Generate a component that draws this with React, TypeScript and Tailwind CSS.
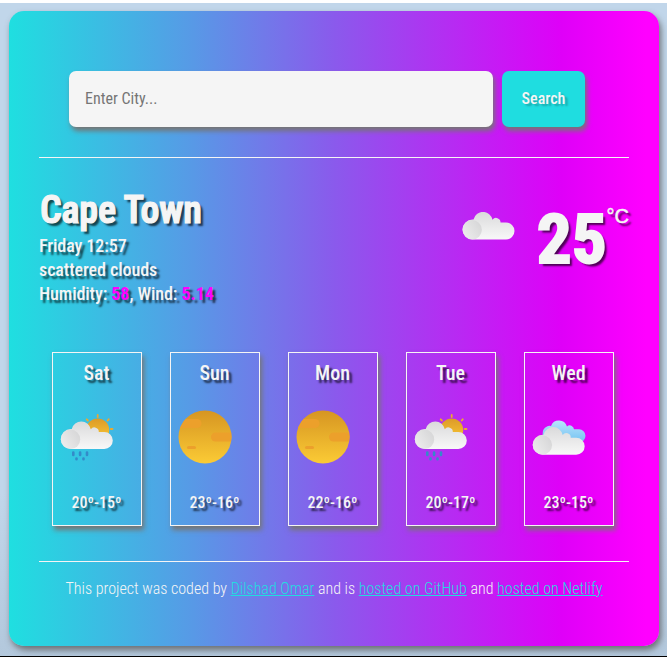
import React from "react";

type Kind = "showers" | "clear" | "broken" | "scattered";

function Cloud({ id }: { id: string }) {
  return (
    <>
      <defs>
        <linearGradient id={`${id}-body`} x1="0" y1="0" x2="0" y2="1">
          <stop offset="0" stopColor="#dadadb" />
          <stop offset="1" stopColor="#f8f8f8" />
        </linearGradient>
        <linearGradient id={`${id}-puff`} x1="1" y1="0.3" x2="0" y2="0.7">
          <stop offset="0" stopColor="#d2d2d3" />
          <stop offset="1" stopColor="#ebebeb" />
        </linearGradient>
      </defs>
      <path
        d="M10.500 27.500a10 10 0 0 1 0-20h1A9.700 9.700 0 0 1 30.500 7.800A4.400 4.400 0 0 1 38.500 10.500H44a8.500 8.500 0 0 1 0 17Z"
        fill={`url(#${id}-body)`}
      />
      <circle cx="10.200" cy="17.800" r="9.700" fill={`url(#${id}-puff)`} opacity="0.8" />
    </>
  );
}

function WeatherIcon({ kind, id }: { kind: Kind; id: string }) {
  if (kind === "clear") {
    return (
      <svg className="block h-[54px] w-[54px]" viewBox="0 0 54 54">
        <defs>
          <linearGradient id={`${id}-sun`} x1="0" y1="0" x2="0" y2="1">
            <stop offset="0" stopColor="#d69522" />
            <stop offset="1" stopColor="#fbcb35" />
          </linearGradient>
          <clipPath id={`${id}-clip`}>
            <circle cx="27" cy="27" r="26.500" />
          </clipPath>
        </defs>
        <circle cx="27" cy="27" r="26.500" fill={`url(#${id}-sun)`} />
        <g clipPath={`url(#${id}-clip)`} fill="#eca02b">
          <rect x="-4" y="9" width="27.500" height="9" rx="4.500" />
          <rect x="33" y="22.500" width="26" height="9" rx="4.500" />
          <rect x="9" y="36" width="9" height="3" rx="1.500" />
        </g>
      </svg>
    );
  }
  if (kind === "showers") {
    return (
      <svg className="block h-[54px] w-[54px] overflow-visible" viewBox="0 0 54 54">
        <defs>
          <linearGradient id={`${id}-sun`} x1="0" y1="0" x2="0" y2="1">
            <stop offset="0" stopColor="#dc9a28" />
            <stop offset="1" stopColor="#fbcb35" />
          </linearGradient>
        </defs>
        <circle cx="37.700" cy="20" r="11.500" fill={`url(#${id}-sun)`} />
        <g stroke="#eba92f" strokeWidth="1.800" strokeLinecap="round">
          <path d="M37.700 5v2M48.700 9.300l-1 1.200M50.700 19h1.800M26.700 9.300l1.200 1.200" />
        </g>
        <g transform="translate(.3 11.500)">
          <Cloud id={id} />
        </g>
        <g stroke="#348bc9" strokeWidth="2.600" strokeLinecap="round">
          <path d="M13.300 42.500v2.500M20.100 42.500v2.500M27 42.500v2.500M16.500 48.500v.8M23.500 48.500v.8" />
        </g>
      </svg>
    );
  }
  if (kind === "broken") {
    return (
      <svg className="block h-[54px] w-[54px] overflow-visible" viewBox="0 0 54 54">
        <defs>
          <linearGradient id={`${id}-back`} x1="0" y1="0" x2="0" y2="1">
            <stop offset="0" stopColor="#b9e3fb" />
            <stop offset="1" stopColor="#72c3f2" />
          </linearGradient>
        </defs>
        <path
          d="M16 30.500a7.500 7.500 0 0 1-1-14 4 4 0 0 1 4-.5A8.500 8.500 0 0 1 35 16.500a4.200 4.200 0 0 1 7 2.800h5a6.500 6.500 0 0 1 0 13Z"
          fill={`url(#${id}-back)`}
        />
        <g transform="translate(.2 17.200)">
          <Cloud id={id} />
        </g>
      </svg>
    );
  }
  return (
    <svg className="block h-[28px] w-[54px]" viewBox="0 0 54 28">
      <Cloud id={id} />
    </svg>
  );
}

const days: { name: string; kind: Kind; temps: string }[] = [
  { name: "Sat", kind: "showers", temps: "20º-15º" },
  { name: "Sun", kind: "clear", temps: "23º-16º" },
  { name: "Mon", kind: "clear", temps: "22º-16º" },
  { name: "Tue", kind: "showers", temps: "20º-17º" },
  { name: "Wed", kind: "broken", temps: "23º-15º" },
];

function Link({ children }: { children: React.ReactNode }) {
  return (
    <a href="#" className="text-[#1fdde0] underline">
      {children}
    </a>
  );
}

export default function App() {
  return (
    <div className="h-[657px] w-[667px] overflow-hidden border-t-[3px] border-b border-t-white border-b-black bg-linear-to-b from-[#c1d6ea] from-75% to-[#b3c8dc] px-[9px] pt-[8px] font-['Roboto_Condensed','Roboto',sans-serif] text-[#f5f5f5] [font-stretch:75%]">
      <main className="flex h-[635px] w-[650px] flex-col rounded-[15px] bg-[linear-gradient(90deg,#1fdfe0_0%,#579ae6_28%,#8a5aec_50%,#df00f8_85%,#ff00ff_98%)] px-[30px] pt-[60px] shadow-[2px_4px_6px_rgba(90,90,90,0.8)]">
        <form className="flex gap-[9px] pl-[30px]" onSubmit={(e) => e.preventDefault()}>
          <input
            type="text"
            placeholder="Enter City..."
            className="h-[56px] w-[424px] rounded-[7px] bg-[#f5f5f5] px-4 pb-[2px] text-base shadow-[2px_4px_5px_#757575] placeholder:text-[#757575]"
          />
          <button className="h-[56px] w-[83px] rounded-[7px] bg-[#1fdde0] text-base font-medium shadow-[2px_4px_5px_#757575] [text-shadow:3px_2px_2px_rgba(0,0,0,0.25)]">
            Search
          </button>
        </form>
        <hr className="mt-[30px] border-[#f5f5f5]" />

        <section className="flex h-[194px] justify-between pt-[28px]">
          <div className="text-[18px] leading-6 font-medium tracking-[-0.06px] [text-shadow:3px_3px_2px_rgba(0,0,0,0.65)]">
            <h1 className="pt-px pl-px text-[38px] leading-[47px] font-semibold tracking-[-0.15px] [-webkit-text-stroke:1.2px_#f5f5f5]">
              Cape Town
            </h1>
            <p>Friday 12:57</p>
            <p>scattered clouds</p>
            <p>
              Humidity: <span className="font-bold text-[#f0f]">58</span>, Wind:{" "}
              <span className="font-bold text-[#f0f]">5.14</span>
            </p>
          </div>
          <div className="flex items-start [text-shadow:3px_3px_2px_rgba(0,0,0,0.65)]">
            <div className="mt-[26px] mr-[21px]">
              <WeatherIcon kind="scattered" id="now" />
            </div>
            <span className="mt-[12px] text-[69px] leading-[84px] font-bold [-webkit-text-stroke:2px_#f5f5f5]">
              25
            </span>
            <span className="mt-[18px] font-['Liberation_Sans',sans-serif] text-[20px] leading-6 [-webkit-text-stroke:0.5px_#f5f5f5]">
              °C
            </span>
          </div>
        </section>

        <section className="flex gap-[28px] px-[13px]">
          {days.map((day) => (
            <article
              key={day.name}
              className="flex h-[174px] w-[90px] flex-col border border-[#f5f5f5] pt-2 text-center shadow-[2px_4px_5px_#757575]"
            >
              <h2 className="pr-px text-[20px] leading-6 font-medium [text-shadow:3px_3px_2px_rgba(0,0,0,0.65)]">
                {day.name}
              </h2>
              <div className="mt-[25px] ml-[7px]">
                <WeatherIcon kind={day.kind} id={day.name} />
              </div>
              <p className="mt-[27px] pr-px text-base leading-6 font-medium [text-shadow:3px_3px_2px_rgba(0,0,0,0.65)]">
                {day.temps}
              </p>
            </article>
          ))}
        </section>

        <hr className="mt-[35px] border-[#f5f5f5]" />
        <footer className="mt-[15px] text-center text-base leading-6 font-[340] whitespace-nowrap">
          This project was coded by <Link>Dilshad Omar</Link> and is <Link>hosted on GitHub</Link> and{" "}
          <Link>hosted on Netlify</Link>
        </footer>
      </main>
    </div>
  );
}
